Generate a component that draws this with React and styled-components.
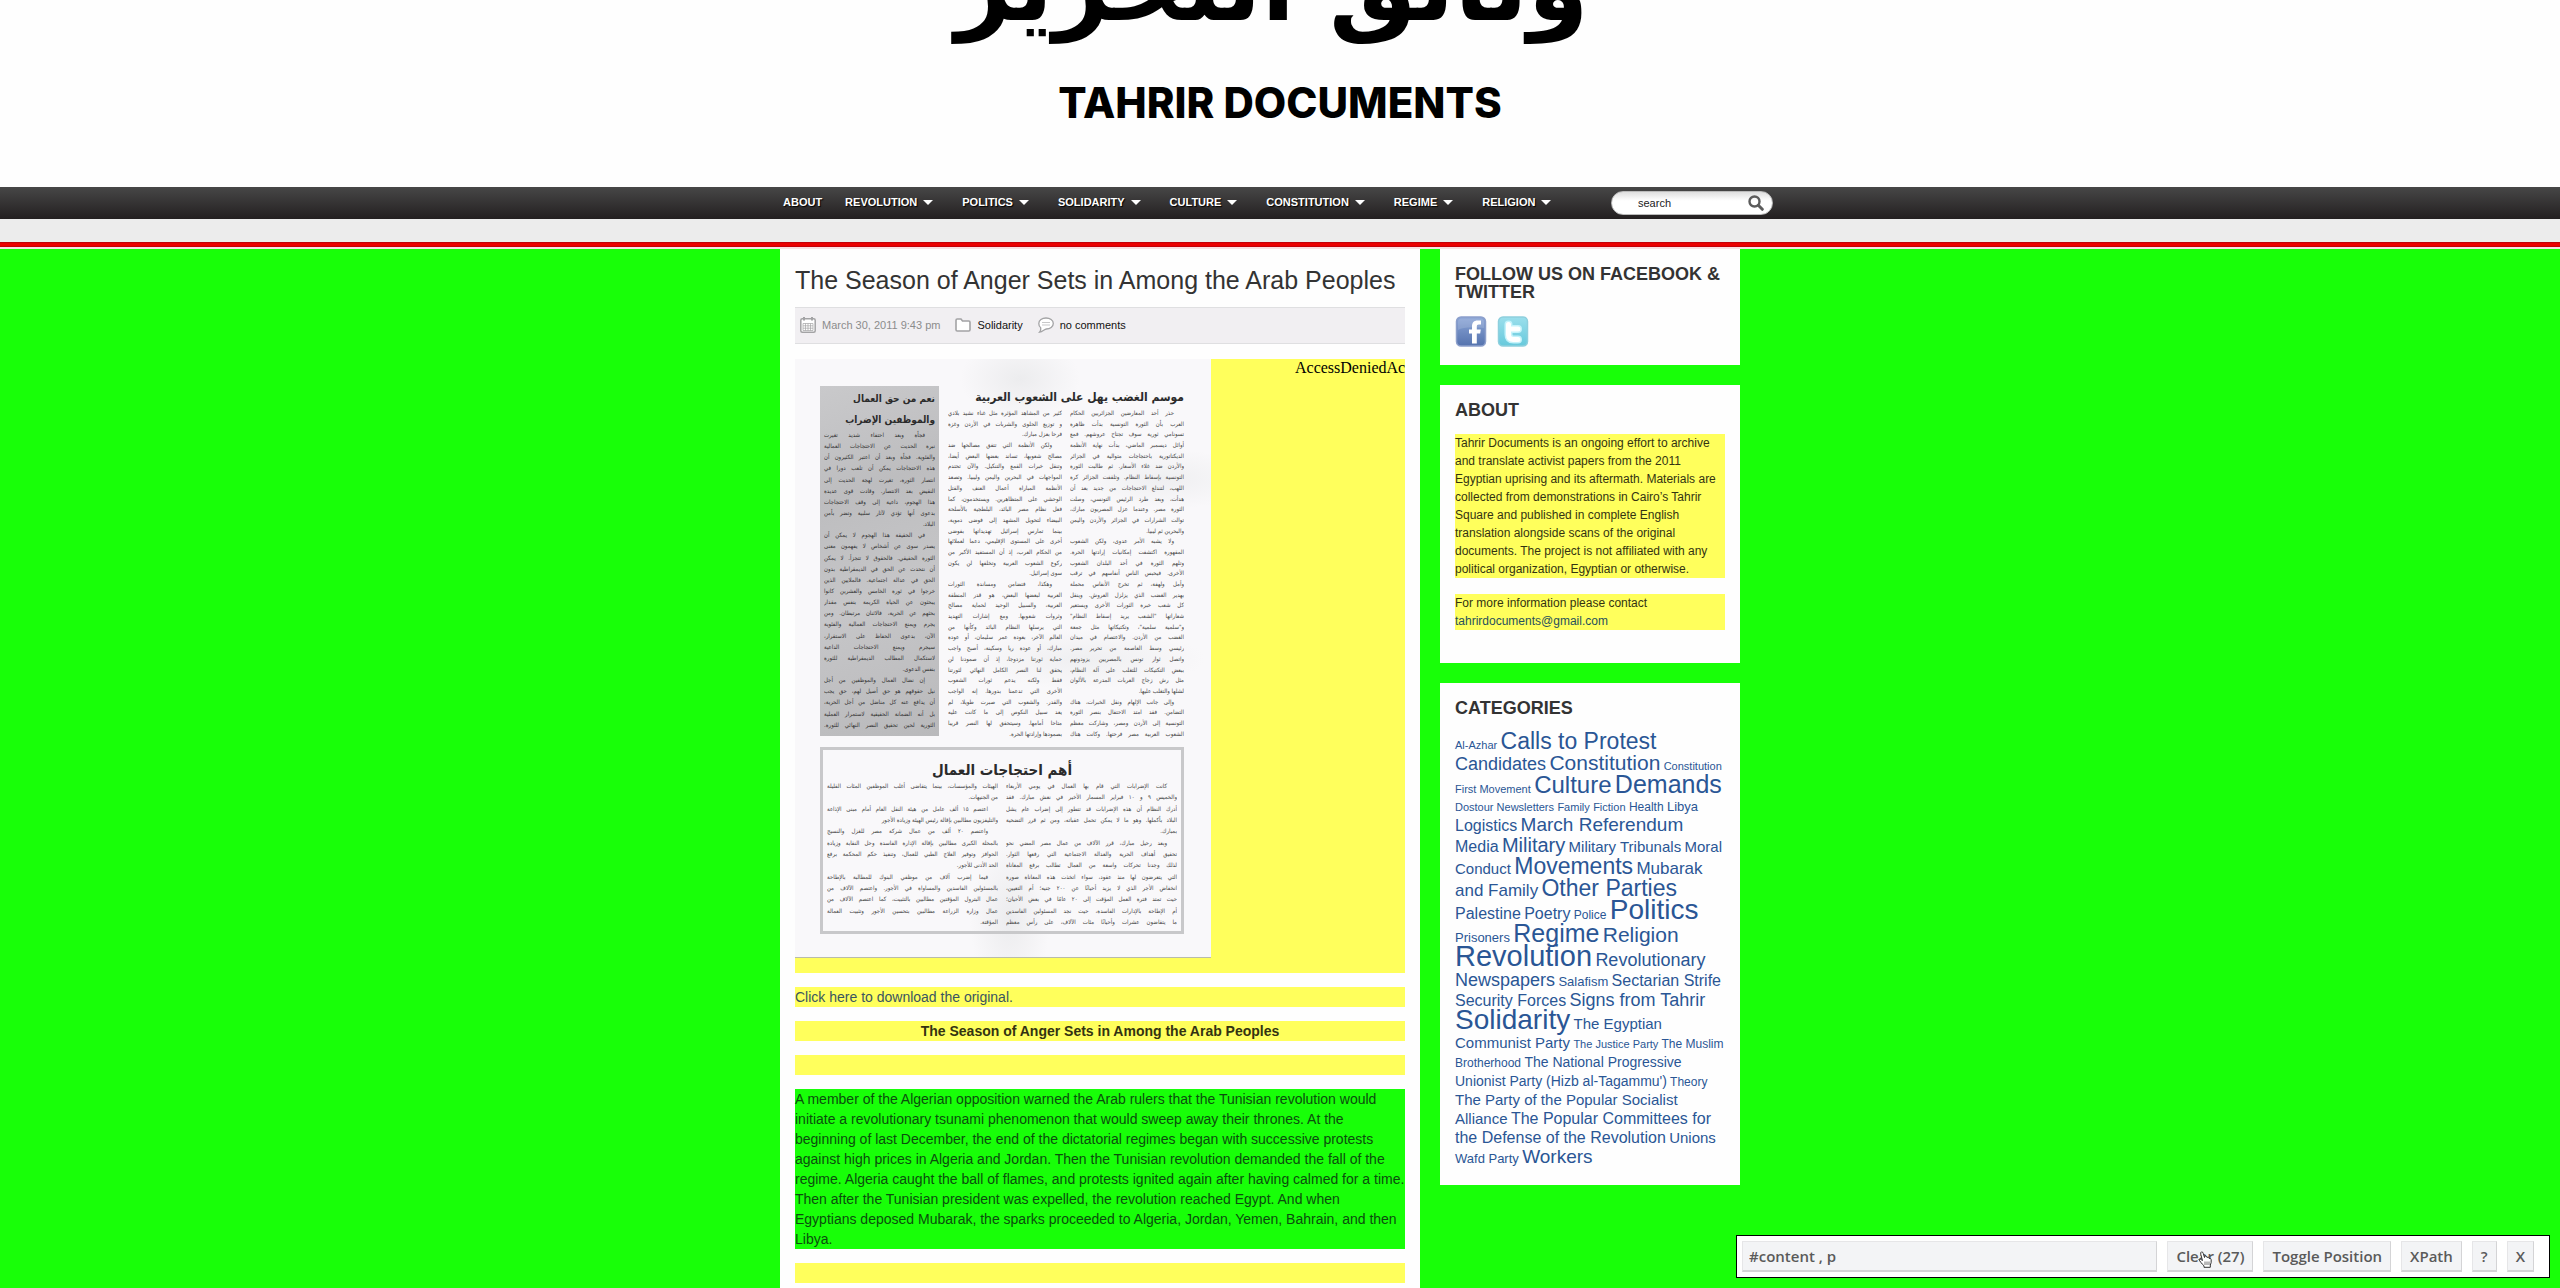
import React from 'react';
import styled, { createGlobalStyle } from 'styled-components';

const GREEN = '#18ff08';
const YELLOW = '#ffff5c';
const SANS = '"Liberation Sans", Arial, sans-serif';

const GlobalStyle = createGlobalStyle`
  * { box-sizing: border-box; }
  html, body { margin: 0; }
  body {
    background: ${GREEN};
    color: #333;
    font-family: ${SANS};
    font-size: 12px;
    line-height: 18px;
    overflow: hidden;
  }
  a { color: inherit; text-decoration: none; }
`;

const Page = styled.div`
  min-height: 100vh;
  display: flex;
  flex-direction: column;
`;

/* ---------- header ---------- */

const Masthead = styled.header`
  height: 187px;
  padding-bottom: 60px;
  overflow: hidden;
  background: #fefefe;
  color: #000;
  display: flex;
  flex-direction: column;
  align-items: center;
  justify-content: flex-end;
`;

const ArabicName = styled.div`
  direction: rtl;
  margin-bottom: 38px;
  padding-right: 16px;
  font-family: "DejaVu Sans", sans-serif;
  font-size: 98px;
  font-weight: 700;
  line-height: 110px;
  white-space: nowrap;
`;

const SiteName = styled.h1`
  margin: 0;
  font-family: Inter, ${SANS};
  font-size: 42px;
  font-weight: 800;
  line-height: 48px;
`;

const NavBar = styled.nav`
  height: 32px;
  background: linear-gradient(#474747, #231f20);
`;

const Container = styled.div`
  width: 1000px;
  max-width: 100%;
  margin: 0 auto;
`;

const NavRow = styled(Container)`
  height: 100%;
  display: flex;
  align-items: center;
  justify-content: space-between;
  padding: 0 7px 0 3px;
`;

const NavList = styled.ul`
  list-style: none;
  margin: 0;
  padding: 0 0 2px;
  display: flex;
  gap: 23px;
`;

const NavLink = styled.a`
  display: flex;
  align-items: center;
  gap: 6px;
  padding-right: ${(p) => (p.$menu ? '6px' : '0')};
  color: #fff;
  font-size: 11px;
  font-weight: 700;
  text-shadow: 1px 1px 1px #000;
`;

const Caret = styled.span`
  border: 5px solid transparent;
  border-top-color: #fff;
  border-bottom: 0;
`;

const SearchForm = styled.form`
  display: flex;
  align-items: center;
  width: 162px;
  height: 24px;
  padding: 0 8px 0 26px;
  border-radius: 12px;
  background: linear-gradient(#dedede, #fff 40%);
  border: 1px solid #bbb;
`;

const SearchInput = styled.input`
  flex: 1;
  min-width: 0;
  padding: 0;
  border: 0;
  background: none;
  color: #222;
  font: 11px ${SANS};
  &::placeholder { color: #222; opacity: 1; }
`;

const PlainButton = styled.button`
  display: flex;
  padding: 0;
  border: 0;
  background: none;
`;

const SubBar = styled.div`
  height: 23px;
  background: #ececec;
`;

const RedRule = styled.div`
  height: 7px;
  border-bottom: 2px solid #fadfe3;
  background: linear-gradient(#b5000a, #ef0000 35%, #ef0000 65%, #b5000a);
`;

/* ---------- columns ---------- */

const Columns = styled(Container)`
  flex: 1;
  display: flex;
  align-items: stretch;
  gap: 20px;
`;

const Content = styled.main`
  width: 640px;
  padding: 11px 15px 5px;
  background: #fefefe;
`;

const PostTitle = styled.h2`
  margin: 0 0 7px;
  font-size: 25px;
  font-weight: 400;
  line-height: 40px;
`;

const Meta = styled.div`
  display: flex;
  align-items: center;
  height: 37px;
  margin-bottom: 15px;
  padding: 0 5px 2px;
  border: solid #dfdfe1;
  border-width: 1px 0;
  background: #f1eff2;
  font-size: 11px;
`;

const MetaItem = styled.span`
  display: flex;
  align-items: center;
  gap: 6px;
  margin-right: 15px;
  color: ${(p) => (p.$muted ? '#8c8c8c' : '#111')};
`;

const Block = styled.p`
  margin: 0 0 14px;
  min-height: 20px;
  background: ${(p) => p.$fill || YELLOW};
  color: ${(p) => p.$color || '#333311'};
  font-size: 14px;
  font-weight: ${(p) => (p.$bold ? 700 : 400)};
  line-height: 20px;
  text-align: ${(p) => (p.$bold ? 'center' : 'left')};
`;

const Figure = styled.div`
  display: flex;
  justify-content: space-between;
  align-items: flex-start;
  margin-bottom: 14px;
  padding-bottom: 15px;
  background: ${YELLOW};
  overflow: hidden;
`;

const Denied = styled.div`
  width: 110px;
  overflow: hidden;
  color: #000;
  font-family: "Liberation Serif", "Times New Roman", serif;
  font-size: 16px;
  white-space: nowrap;
`;

/* ---------- scanned leaflet ---------- */

const Paper = styled.article`
  direction: rtl;
  width: 416px;
  height: 599px;
  padding: 27px 27px 0 25px;
  overflow: hidden;
  border-bottom: 1px solid #b9bcab;
  background:
    radial-gradient(ellipse 60px 40px at 225px 20px, #ececee, transparent),
    radial-gradient(ellipse 40px 80px at 215px 560px, #ececee, transparent),
    radial-gradient(ellipse 90px 30px at 370px 120px, #efeff1, transparent),
    radial-gradient(ellipse 120px 30px at 290px 300px, #efeff1, transparent),
    #f9f8fa;
  color: #444;
  font-family: "DejaVu Sans Condensed", "DejaVu Sans", sans-serif;
`;

const PaperTop = styled.div`
  display: flex;
  gap: 9px;
  height: 361px;
  align-items: flex-start;
`;

const PaperMain = styled.section`
  flex: 1;
  min-width: 0;
`;

const PaperTitle = styled.h3`
  margin: 0;
  color: #2b2b2b;
  font-size: ${(p) => p.$size}px;
  font-weight: 700;
  line-height: ${(p) => p.$line}px;
  text-align: ${(p) => p.$align || 'right'};
  white-space: nowrap;
`;

const PaperColumns = styled.div`
  display: grid;
  grid-template-columns: 1fr 1fr;
  gap: 8px;
`;

const Lines = styled.div`
  display: flex;
  flex-direction: column;
  justify-content: space-between;
  height: ${(p) => p.$height}px;
  min-width: 0;
`;

const Line = styled.div`
  height: 10px;
  overflow: hidden;
  font-size: 6px;
  line-height: 10px;
  padding-right: ${(p) => (p.$indent ? '10px' : '0')};
  text-align: right;
  text-align-last: ${(p) => (p.$last ? 'right' : 'justify')};
`;

const Shaded = styled.section`
  width: 119px;
  height: 350px;
  padding: 2px 4px;
  background: linear-gradient(160deg, #c9c9cb, #bdbdbf 30%, #c6c6c8 60%, #b9b9bb);
  color: #333;
`;

const Framed = styled.section`
  height: 187px;
  padding: 9px 4px;
  border: 3px solid #c8c8ca;
`;

/* ---------- sidebar ---------- */

const Sidebar = styled.aside`
  width: 300px;
  display: flex;
  flex-direction: column;
  gap: 20px;
`;

const Widget = styled.section`
  padding: 16px 15px 17px;
  background: #fefefe;
`;

const WidgetTitle = styled.h3`
  margin: 0 0 15px;
  font-size: 18px;
  font-weight: 700;
  line-height: 18px;
  text-transform: uppercase;
`;

const WidgetText = styled.p`
  margin: 0 0 16px;
  background: ${YELLOW};
  color: #333311;
`;

const MailLink = styled.a`
  color: #27505c;
`;

const Social = styled.div`
  display: flex;
  gap: 10px;
  height: 32px;
`;

const Cloud = styled.div`
  color: #2a5695;
`;

const Tag = styled.a`
  font-size: ${(p) => p.$size}px;
`;

/* ---------- selector toolbar ---------- */

const Toolbar = styled.form`
  position: fixed;
  right: 10px;
  bottom: 10px;
  display: flex;
  gap: 10px;
  width: 814px;
  height: 43px;
  padding: 5px 15px 5px 5px;
  border: 1px solid #000;
  background: #fff;
`;

const control = `
  height: 31px;
  border: 1px solid #e6e6e8;
  border-right-color: #d4d4d6;
  border-bottom: 2px solid #d4d4d6;
  border-radius: 0;
  background: #f3f4f6;
  color: #5a5a5a;
  font-family: "Open Sans", "Noto Sans", sans-serif;
  font-size: 15px;
  font-weight: 600;
`;

const PathField = styled.input`
  ${control}
  flex: 1;
  min-width: 0;
  padding: 0 6px;
`;

const ToolButton = styled.button`
  ${control}
  position: relative;
  padding: 0 8px;
  white-space: nowrap;
`;

const Pointer = styled.svg`
  position: absolute;
  left: 30px;
  top: 9px;
`;

/* ---------- data ---------- */

const menu = ['About', 'Revolution', 'Politics', 'Solidarity', 'Culture', 'Constitution', 'Regime', 'Religion'];

const tags = [
  ['Al-Azhar', 11], ['Calls to Protest', 23], ['Candidates', 18], ['Constitution', 21],
  ['Constitution First Movement', 11], ['Culture', 24], ['Demands', 25],
  ['Dostour Newsletters', 11], ['Family', 11], ['Fiction', 11], ['Health', 12], ['Libya', 13],
  ['Logistics', 16], ['March Referendum', 19], ['Media', 16], ['Military', 20],
  ['Military Tribunals', 15], ['Moral Conduct', 15], ['Movements', 23],
  ['Mubarak and Family', 17], ['Other Parties', 23], ['Palestine', 16], ['Poetry', 16],
  ['Police', 12], ['Politics', 28], ['Prisoners', 13], ['Regime', 25], ['Religion', 21],
  ['Revolution', 29], ['Revolutionary Newspapers', 18], ['Salafism', 13],
  ['Sectarian Strife', 16], ['Security Forces', 16], ['Signs from Tahrir', 18],
  ['Solidarity', 28], ['The Egyptian Communist Party', 15], ['The Justice Party', 11],
  ['The Muslim Brotherhood', 12], ['The National Progressive Unionist Party (Hizb al-Tagammu\')', 14],
  ['Theory', 12], ['The Party of the Popular Socialist Alliance', 15],
  ['The Popular Committees for the Defense of the Revolution', 16], ['Unions', 15],
  ['Wafd Party', 13], ['Workers', 19],
];

// A leading ">" indents a line; a trailing "|" leaves it unjustified.
const seasonRight = [
  '>حذر أحد المعارضين الجزائريين الحكام', 'العرب بأن الثورة التونسية بدأت ظاهرة',
  'تسونامي ثورية سوف تجتاح عروشهم. فمع', 'أوائل ديسمبر الماضي، بدأت نهاية الأنظمة',
  'الديكتاتورية باحتجاجات متوالية في الجزائر', 'والأردن ضد غلاء الأسعار. ثم طالبت الثورة',
  'التونسية بإسقاط النظام. وتلقفت الجزائر كرة', 'اللهب، لتندلع الاحتجاجات من جديد بعد أن',
  'هدأت، وبعد طرد الرئيس التونسي، وصلت', 'الثورة مصر. وعندما عزل المصريون مبارك،',
  'توالت الشرارات في الجزائر والأردن واليمن', 'والبحرين ثم ليبيا.|',
  '>ولا يشبه الأمر عدوى، ولكن الشعوب', 'المقهورة اكتشفت إمكانيات إرادتها الحرة.',
  'وتلهم الثورة في أحد البلدان الشعوب', 'الأخرى. فيحبس الناس أنفاسهم في ترقب',
  'وأمل ولهفة، ثم تخرج الأنفاس محملة', 'بهدير الغضب الذي يزلزل العروش. وينقل',
  'كل شعب خبرة الثورات الأخرى ويستعير', 'شعاراتها "الشعب يريد إسقاط النظام"',
  'و"سلمية سلمية"، وتكتيكاتها مثل جمعة', 'الغضب من الأردن. والاعتصام في ميدان',
  'رئيسي وسط العاصمة من تحرير مصر.', 'واتصل ثوار تونس بالمصريين يزودونهم',
  'ببعض التكتيكات للتغلب على آلة النظام،', 'مثل رش زجاج العربات المدرعة بالألوان',
  'لشلها والتغلب عليها.|', '>وإلى جانب الإلهام ونقل الخبرات، هناك',
  'التضامن. فقد امتد الاحتفال بنصر الثورة', 'التونسية إلى الأردن ومصر، وشاركت معظم',
  'الشعوب العربية مصر فرحتها. وكانت هناك',
];

const seasonLeft = [
  'كثير من المشاهد المؤثرة مثل غناء نشيد بلادي', 'و توزيع الحلوى والشربات في الأردن وغزة',
  'فرحا بعزل مبارك.|', '>ولكن الأنظمة التي تتفق مصالحها ضد',
  'مصالح شعوبها، تساند بعضها البعض أيضا،', 'وتنقل خبرات القمع والتنكيل. والآن تحتدم',
  'المواجهات في البحرين واليمن وليبيا. وتصعد', 'الأنظمة المباراة أعمال العنف والقتل',
  'الوحشي على المتظاهرين. ويستخدمون، كما', 'فعل نظام مصر البائد، البلطجية بالأسلحة',
  'البيضاء لتحويل المشهد إلى فوضى دموية،', 'بينما تمارس إسرائيل تهديداتها بفوضى',
  'أخرى على المستوى الإقليمي، دعما لعملائها', 'من الحكام العرب، إذ أن المستفيد الأكبر من',
  'ركوع الشعوب العربية وتخلفها لن يكون', 'سوى إسرائيل.|',
  '>وهكذا، فتضامن ومساندة الثورات', 'العربية لبعضها البعض، هو قدر المنطقة',
  'العربية، والسبيل الوحيد لحماية مصالح', 'وثروات شعوبها. ومع إشارات التهديد',
  'التي يرسلها النظام البائد وكأنها من', 'العالم الآخر، بعودة عمر سليمان، أو عودة',
  'مبارك، أو عودة ريا وسكينة، أصبح واجب', 'حماية ثورتنا مزدوجا، إذ أن صمودنا لن',
  'يحقق لنا النصر الكامل النهائي لثورتنا', 'فقط ولكنه يدعم ثورات الشعوب',
  'الأخرى التي تدعمنا بدورها. إنه الواجب', 'والقدر. والشعوب التي صبرت طويلا، لم',
  'يعد سبيل النكوص إلى ما كانت عليه', 'متاحا أمامها. وسيتحقق لها النصر قريبا',
  'بصمودها وإرادتها الحرة.|',
];

const strikeColumn = [
  '>فجأة وبعد احتفاء شديد تغيرت', 'نبرة الحديث عن الاحتجاجات العمالية',
  'والفئوية. فجأة وبعد أن اعتبر الكثيرون أن', 'هذه الاحتجاجات يمكن أن تلعب دورا في',
  'انتصار الثورة، تغيرت لهجة الحديث إلى', 'النقيض بعد الانتصار. وقادت قوى عديدة',
  'هذا الهجوم، داعية إلى وقف الاحتجاجات', 'بدعوى أنها تؤدي لآثار سلبية وتضر بأمن',
  'البلاد.|', '>في الحقيقة هذا الهجوم لا يمكن أن',
  'يصدر سوى عن أشخاص لا يفهمون معنى', 'الثورة الحقيقي. فالحقوق لا تتجزأ. لا يمكن',
  'أن نتحدث عن الحق في الديمقراطية بدون', 'الحق في عدالة اجتماعية. فالملايين الذين',
  'خرجوا في ثورة الخامس والعشرين كانوا', 'يبحثون عن الحياة الكريمة بنفس مقدار',
  'بحثهم عن الحرية، فالاثنان مرتبطان. ومن', 'يجرم ويمنع الاحتجاجات العمالية والفئوية',
  'الآن، بدعوى الحفاظ على الاستقرار،', 'سيجرم ويمنع الاحتجاجات الداعية',
  'لاستكمال المطالب الديمقراطية للثورة', 'بنفس الدعوى.|',
  '>إن نضال العمال والموظفين من أجل', 'نيل حقوقهم هو حق أصيل لهم، حق يجب',
  'أن يدافع عنه كل مناضل من أجل الحرية،', 'بل أنه الضمانة الحقيقية لاستمرار العملية',
  'الثورية لحين تحقيق النصر النهائي للثورة.',
];

const protestRight = [
  '>كانت الإضرابات التي قام بها العمال في يومي الأربعاء', 'والخميس ٩ و ١٠ فبراير المسمار الأخير في نعش مبارك. فقد',
  'أدرك النظام أن هذه الإضرابات قد تتطور إلى إضراب عام يشل', 'البلاد بأكملها. وهو ما لا يمكن تحمل عقباته، ومن ثم قرر التضحية',
  'بمبارك.|', '>وبعد رحيل مبارك، قرر الآلاف من عمال مصر المضي نحو',
  'تحقيق أهداف الحرية والعدالة الاجتماعية التي رفعها الثوار.', 'لذلك وجدنا تحركات واسعة من العمال تطالب برفع المعاناة',
  'التي يتعرضون لها منذ عقود، سواء اتخذت هذه المعاناة صورة', 'انخفاض الأجر الذي لا يزيد أحيانًا عن ٢٠٠ جنيه؛ أم التعيين،',
  'حيث تمتد فترة العمل المؤقت إلى ٢٠ عامًا في بعض الأحيان؛', 'أم الإطاحة بالإدارات الفاسدة، حيث نجد المسئولين الفاسدين',
  'ما يتقاضون عشرات وأحيانًا مئات الآلاف، على رأس معظم',
];

const protestLeft = [
  'الهيئات والمؤسسات، بينما يتقاضى أغلب الموظفين المئات القليلة', 'من الجنيهات.|',
  '>اعتصم ١٥ ألف عامل من هيئة النقل العام أمام مبنى الإذاعة', 'والتليفزيون مطالبين بإقالة رئيس الهيئة وزيادة الأجور|',
  '>واعتصم ٢٠ ألف من عمال شركة مصر للغزل والنسيج', 'بالمحلة الكبرى مطالبين بإقالة الإدارة الفاسدة وحل النقابة وزيادة',
  'الحوافز وتوفير العلاج الطبي للعمال، وتنفيذ حكم المحكمة برفع', 'الحد الأدنى للأجور.|',
  '>فيما إضرب آلاف من موظفي البنوك للمطالبة بالإطاحة', 'بالمسئولين الفاسدين والمساواة في الأجور. واعتصم الآلاف من',
  'عمال البترول المؤقتين مطالبين بالتثبيت، كما اعتصم الآلاف من', 'عمال وزارة الزراعة مطالبين بتحسين الأجور وتثبيت العمالة',
  'المؤقتة.|',
];

/* ---------- pieces ---------- */

function TextLines({ lines, height }) {
  return (
    <Lines $height={height}>
      {lines.map((line, i) => (
        <Line key={i} $indent={line.startsWith('>')} $last={line.endsWith('|')}>
          {line.replace(/^>|\|$/g, '')}
        </Line>
      ))}
    </Lines>
  );
}

function Leaflet() {
  return (
    <Paper lang="ar">
      <PaperTop>
        <PaperMain>
          <PaperTitle $size={12} $line={22}>موسم الغضب يهل على الشعوب العربية</PaperTitle>
          <PaperColumns>
            <TextLines lines={seasonRight} height={331} />
            <TextLines lines={seasonLeft} height={331} />
          </PaperColumns>
        </PaperMain>
        <Shaded>
          <PaperTitle $size={10} $line={21}>نعم من حق العمال</PaperTitle>
          <PaperTitle $size={10} $line={21}>والموظفين الإضراب</PaperTitle>
          <TextLines lines={strikeColumn} height={300} />
        </Shaded>
      </PaperTop>
      <Framed>
        <PaperTitle $size={15} $line={22} $align="center">أهم احتجاجات العمال</PaperTitle>
        <PaperColumns>
          <TextLines lines={protestRight} height={146} />
          <TextLines lines={protestLeft} height={146} />
        </PaperColumns>
      </Framed>
    </Paper>
  );
}

const CalendarIcon = () => (
  <svg width="16" height="16" viewBox="0 0 16 16" fill="none" stroke="#a3a3a5" aria-hidden="true">
    <rect x="0.8" y="1.8" width="14.4" height="13.4" rx="1.5" strokeWidth="1.5" fill="#fff" />
    <path d="M4 0v3.5M12 0v3.5" strokeWidth="2" />
    <path d="M3 6.5h10v7H3zM3 8.8h10M3 11.2h10M5.5 6.5v7M8 6.5v7M10.500 6.5v7" strokeWidth="0.7" />
  </svg>
);

const FolderIcon = () => (
  <svg width="16" height="16" viewBox="0 0 16 16" fill="#fff" stroke="#a3a3a5" strokeWidth="1.6" aria-hidden="true">
    <path d="M1 3.200Q1 2 2.200 2H6l1.500 2h6.300Q15 4 15 5.200v7.600Q15 14 13.800 14H2.200Q1 14 1 12.800z" />
  </svg>
);

const CommentIcon = () => (
  <svg width="16" height="16" viewBox="0 0 16 16" fill="#fff" stroke="#a3a3a5" strokeWidth="1.3" aria-hidden="true">
    <path d="M8 1C12 1 15.300 3.300 15.300 6.500S12 12 8.300 12C6.500 12.200 4.500 14.800 1.600 15.200C2.600 14 3 12.500 2.600 10.600C1.300 9.600 .8 8 .8 6.500C.8 3.300 4 1 8 1z" />
    <path d="M4 5.500h8M4 8h8" strokeWidth="0.6" />
  </svg>
);

const SearchIcon = () => (
  <svg width="16" height="16" viewBox="0 0 16 16" fill="none" stroke="#5b5b5b" aria-hidden="true">
    <circle cx="6.500" cy="6.500" r="5" strokeWidth="2.400" />
    <path d="M10.300 10.300l4 4" strokeWidth="3" strokeLinecap="round" />
  </svg>
);

const FacebookIcon = () => (
  <svg width="32" height="32" viewBox="0 0 32 32" aria-hidden="true">
    <defs>
      <linearGradient id="fb" x1="0" y1="0" x2="0" y2="1">
        <stop offset="0" stopColor="#8ba5d6" /><stop offset="1" stopColor="#5573ae" />
      </linearGradient>
    </defs>
    <rect x="1.500" y="1" width="29" height="29" rx="4.500" fill="url(#fb)" stroke="#8c9fcb" strokeWidth="1.500" />
    <path d="M3 14Q10 10 29 12V6Q29 2.500 25.500 2.500H6.500Q3 2.500 3 6z" fill="#fff" opacity=".14" />
    <path d="M17 27.500V17.500h-3v-4h3V10.500C17 6.500 19 4.500 22.500 4.500h3.500v4h-2.200c-1.500 0-2 .7-2 2v3h4l-.6 4h-3.400v10z" fill="#fff" />
  </svg>
);

const TwitterIcon = () => (
  <svg width="32" height="32" viewBox="0 0 32 32" aria-hidden="true">
    <defs>
      <linearGradient id="tw" x1="0" y1="0" x2="0" y2="1">
        <stop offset="0" stopColor="#9bdfec" /><stop offset="1" stopColor="#67c9dc" />
      </linearGradient>
    </defs>
    <rect x="1.500" y="1" width="29" height="29" rx="4.500" fill="url(#tw)" stroke="#8ecfdd" strokeWidth="1.500" />
    <path d="M11.500 8.500V18.500Q11.500 23.500 16.500 23.500H21M11.500 13H21" fill="none" stroke="#c5f3fb" strokeWidth="8" strokeLinecap="round" />
    <path d="M11.500 8.500V18.500Q11.500 23.500 16.500 23.500H21M11.500 13H21" fill="none" stroke="#fff" strokeWidth="5" strokeLinecap="round" />
  </svg>
);

const HandPointer = () => (
  <Pointer width="14" height="17" viewBox="0 0 14 17" fill="#fff" stroke="#333" strokeWidth="1" aria-hidden="true">
    <path d="M4.500 9.500L2.800 3.500Q2.300 1.200 3.500 .9T5.300 2.500L6.500 6.500L6.700 5.300Q8 4.300 8.800 5.800L9 6.500Q10.300 5.300 11 6.800L11.200 7.500Q13 6.800 13.200 8.800Q13.500 12 12.300 14V16.300H6V14.800Q4 13 2.800 11.300T.8 8.500Q1.800 7.200 4.500 9.500z" />
    <path d="M7 10.500v3.500M9 10.500v3.500M11 10.500v3.500" strokeWidth="0.7" />
  </Pointer>
);

export default function App() {
  return (
    <Page>
      <GlobalStyle />
      <Masthead>
        <ArabicName lang="ar">وثائق التحرير</ArabicName>
        <SiteName>TAHRIR DOCUMENTS</SiteName>
      </Masthead>
      <NavBar>
        <NavRow>
          <NavList>
            {menu.map((name, i) => (
              <li key={name}>
                <NavLink href="#" $menu={i > 0}>
                  {name.toUpperCase()}
                  {i > 0 && <Caret />}
                </NavLink>
              </li>
            ))}
          </NavList>
          <SearchForm role="search">
            <SearchInput type="text" placeholder="search" aria-label="search" />
            <PlainButton type="button" aria-label="search"><SearchIcon /></PlainButton>
          </SearchForm>
        </NavRow>
      </NavBar>
      <SubBar />
      <RedRule />
      <Columns>
        <Content>
          <PostTitle>The Season of Anger Sets in Among the Arab Peoples</PostTitle>
          <Meta>
            <MetaItem $muted><CalendarIcon />March 30, 2011 9:43 pm</MetaItem>
            <MetaItem><FolderIcon /><a href="#">Solidarity</a></MetaItem>
            <MetaItem><CommentIcon /><a href="#">no comments</a></MetaItem>
          </Meta>
          <Figure>
            <Leaflet />
            <Denied>AccessDeniedAccess</Denied>
          </Figure>
          <Block $color="#3a5560"><a href="#">Click here to download the original.</a></Block>
          <Block $bold>The Season of Anger Sets in Among the Arab Peoples</Block>
          <Block />
          <Block $fill={GREEN} $color="#0b4d0d">
            A member of the Algerian opposition warned the Arab rulers that the Tunisian revolution would
            initiate a revolutionary tsunami phenomenon that would sweep away their thrones. At the
            beginning of last December, the end of the dictatorial regimes began with successive protests
            against high prices in Algeria and Jordan. Then the Tunisian revolution demanded the fall of the
            regime. Algeria caught the ball of flames, and protests ignited again after having calmed for a time.
            Then after the Tunisian president was expelled, the revolution reached Egypt. And when
            Egyptians deposed Mubarak, the sparks proceeded to Algeria, Jordan, Yemen, Bahrain, and then
            Libya.
          </Block>
          <Block />
        </Content>
        <Sidebar>
          <Widget>
            <WidgetTitle>Follow us on Facebook &amp; Twitter</WidgetTitle>
            <Social>
              <a href="#" aria-label="Facebook"><FacebookIcon /></a>
              <a href="#" aria-label="Twitter"><TwitterIcon /></a>
            </Social>
          </Widget>
          <Widget>
            <WidgetTitle>About</WidgetTitle>
            <WidgetText>
              Tahrir Documents is an ongoing effort to archive and translate activist papers from the 2011
              Egyptian uprising and its aftermath. Materials are collected from demonstrations in Cairo’s
              Tahrir Square and published in complete English translation alongside scans of the original
              documents. The project is not affiliated with any political organization, Egyptian or otherwise.
            </WidgetText>
            <WidgetText>
              For more information please contact <MailLink href="#">tahrirdocuments@gmail.com</MailLink>
            </WidgetText>
          </Widget>
          <Widget>
            <WidgetTitle>Categories</WidgetTitle>
            <Cloud>
              {tags.map(([name, size]) => (
                <React.Fragment key={name}>
                  <Tag href="#" $size={size}>{name}</Tag>{' '}
                </React.Fragment>
              ))}
            </Cloud>
          </Widget>
        </Sidebar>
      </Columns>
      <Toolbar>
        <PathField type="text" defaultValue="#content , p" aria-label="Selector" />
        <ToolButton type="button">Clear (27)<HandPointer /></ToolButton>
        <ToolButton type="button">Toggle Position</ToolButton>
        <ToolButton type="button">XPath</ToolButton>
        <ToolButton type="button">?</ToolButton>
        <ToolButton type="button">X</ToolButton>
      </Toolbar>
    </Page>
  );
}
